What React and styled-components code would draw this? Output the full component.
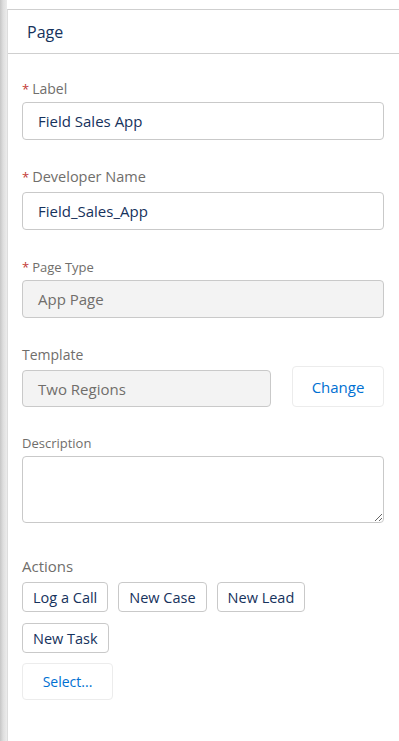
import * as React from 'react';
import styled, { createGlobalStyle } from 'styled-components';

const GlobalStyle = createGlobalStyle`
  html, body {
    margin: 0;
    padding: 0;
    background: #ffffff;
  }
  body {
    font-family: "Open Sans", "Noto Sans", sans-serif;
    color: #080707;
  }
`;

const Shell = styled.div`
  display: flex;
  min-height: 741px;
`;

const Gutter = styled.div`
  width: 7px;
  flex-shrink: 0;
  background: linear-gradient(to right, #c6c6c6, #dedede 45%, #ececec);
`;

const Panel = styled.div`
  flex: 1;
  margin-top: 9px;
  border-top: 1px solid #cfcfcf;
  border-left: 1px solid #dddddd;
`;

const Header = styled.div`
  height: 43px;
  display: flex;
  align-items: center;
  padding-left: 19px;
  border-bottom: 1px solid #cfcfcf;
  font-size: 16px;
  color: #16325c;
`;

const Body = styled.div`
  padding: 26px 15px 30px 14px;
`;

const Field = styled.div`
  display: flex;
  flex-direction: column;
  gap: ${(p) => p.$gap || '4px'};
  margin-top: ${(p) => (p.$first ? '0' : p.$space || '28px')};
`;

const Label = styled.label`
  font-size: ${(p) => p.$size || '13px'};
  line-height: 18px;
  color: #706e6b;
`;

const Required = styled.abbr`
  color: #c23934;
  text-decoration: none;
  margin-right: 3px;
  font-size: 13px;
`;

const Input = styled.div`
  box-sizing: border-box;
  height: ${(p) => p.$h || '38px'};
  flex: ${(p) => (p.$grow ? '1 1 auto' : 'none')};
  display: flex;
  align-items: center;
  padding: 0 15px;
  border: 1px solid #c9c9c9;
  border-radius: 4px;
  font-size: 15px;
  background: ${(p) => (p.$disabled ? '#f3f3f3' : '#ffffff')};
  color: ${(p) => (p.$disabled ? '#706e6b' : '#16325c')};
`;

const TextArea = styled.textarea`
  box-sizing: border-box;
  height: 67px;
  width: 100%;
  margin: 0;
  display: block;
  border: 1px solid #c9c9c9;
  border-radius: 4px;
  font-family: inherit;
  font-size: 15px;
`;

const Row = styled.div`
  display: flex;
  align-items: flex-end;
  gap: 21px;
`;

const GhostButton = styled.button`
  box-sizing: border-box;
  height: ${(p) => p.$h || '41px'};
  width: ${(p) => p.$w || 'auto'};
  padding: 0;
  border: 1px solid #ececec;
  border-radius: 4px;
  background: #ffffff;
  color: #0070d2;
  font-family: inherit;
  font-size: ${(p) => p.$size || '15px'};
  flex-shrink: 0;
`;

const Actions = styled.div`
  display: flex;
  flex-wrap: wrap;
  gap: 11px 10px;
  align-items: flex-start;
`;

const ActionButton = styled.button`
  box-sizing: border-box;
  height: 30px;
  padding: 0 10px;
  border: 1px solid #c9c9c9;
  border-radius: 4px;
  background: #ffffff;
  color: #16325c;
  font-family: inherit;
  font-size: 14.5px;
`;

const SelectRow = styled.div`
  margin-top: 3px;
`;

const actions = ['Log a Call', 'New Case', 'New Lead', 'New Task'];

const App = () => {
  return (
    <>
      <GlobalStyle />
      <Shell>
        <Gutter />
        <Panel>
          <Header>Page</Header>
          <Body>
            <Field $first>
              <Label $size="14px">
                <Required>*</Required>Label
              </Label>
              <Input>Field Sales App</Input>
            </Field>
            <Field $gap="6px">
              <Label $size="14.5px">
                <Required>*</Required>Developer Name
              </Label>
              <Input>Field_Sales_App</Input>
            </Field>
            <Field>
              <Label>
                <Required>*</Required>Page Type
              </Label>
              <Input $disabled>App Page</Input>
            </Field>
            <Field $gap="2px">
              <Label $size="14px">Template</Label>
              <Row>
                <Input $disabled $grow $h="37px">
                  Two Regions
                </Input>
                <GhostButton $w="92px">Change</GhostButton>
              </Row>
            </Field>
            <Field $space="27px">
              <Label>Description</Label>
              <TextArea />
            </Field>
            <Field $gap="7px" $space="34px">
              <Label $size="15px">Actions</Label>
              <Actions>
                {actions.map((a) => (
                  <ActionButton key={a}>{a}</ActionButton>
                ))}
              </Actions>
              <SelectRow>
                <GhostButton $w="91px" $h="37px" $size="14px">
                  Select...
                </GhostButton>
              </SelectRow>
            </Field>
          </Body>
        </Panel>
      </Shell>
    </>
  );
};

export default App;
